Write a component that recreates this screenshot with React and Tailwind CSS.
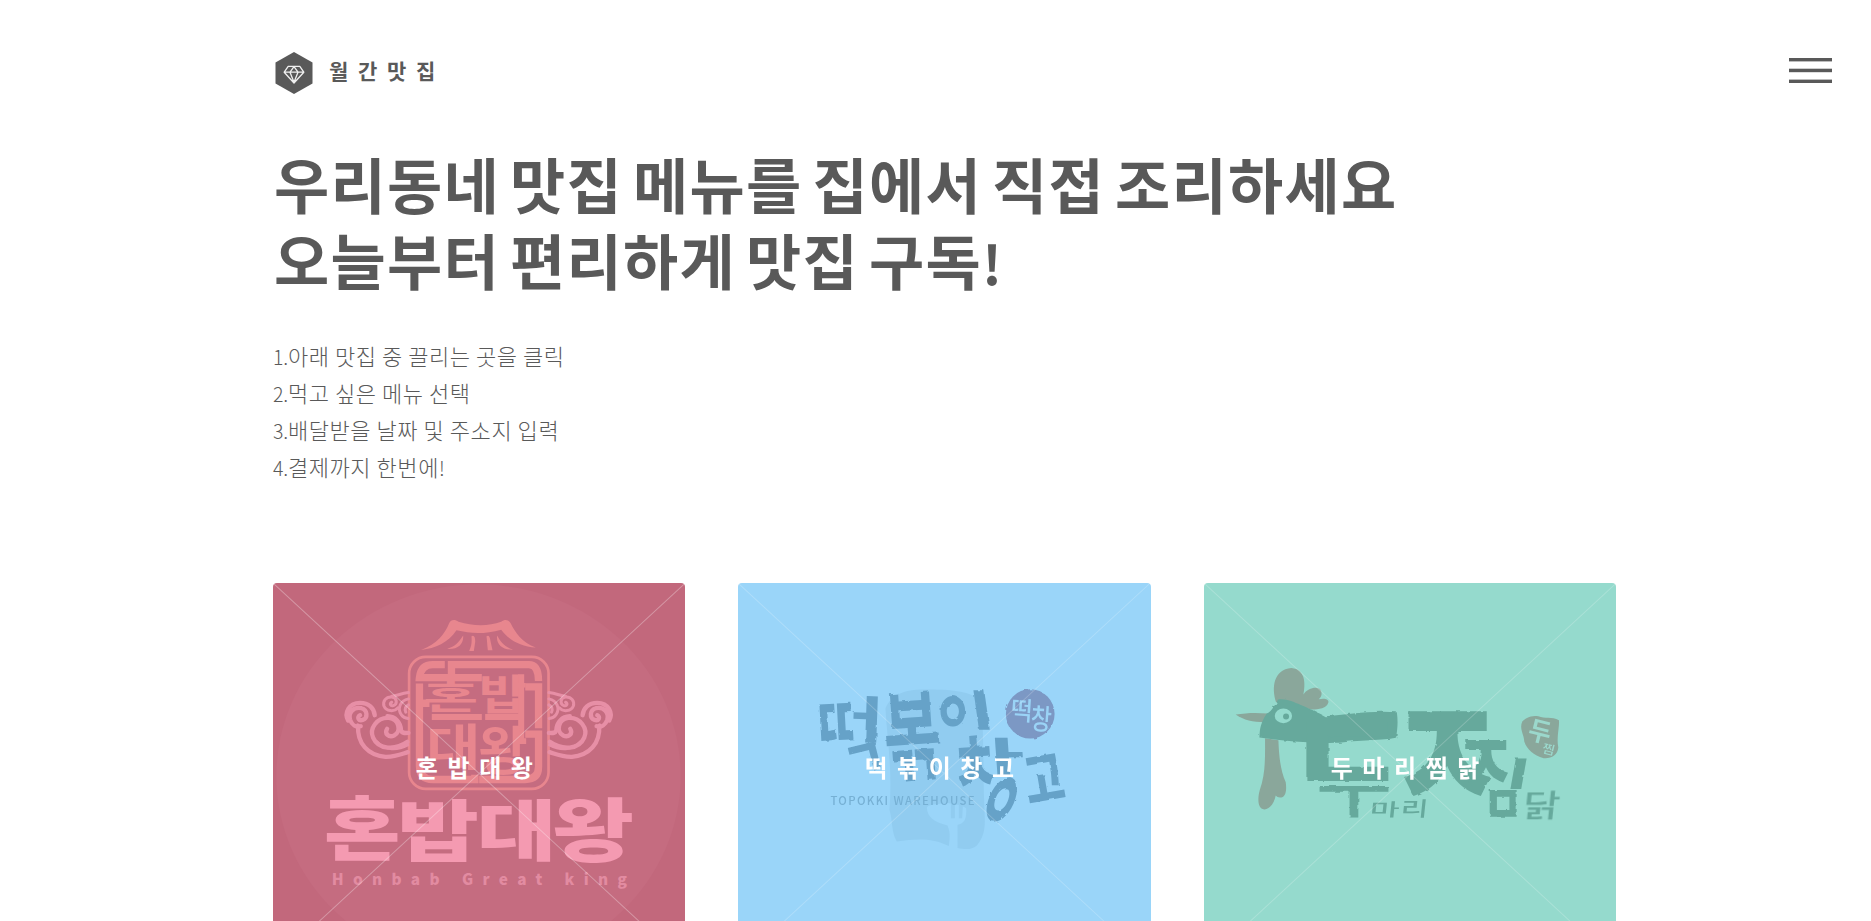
const FONT = '"Noto Sans CJK KR", "Noto Sans", sans-serif';

const ctx = document.createElement("canvas").getContext("2d");

// Sets a piece of real text so that its ink fills the box x, y, w, h.
function Ink({ children, x, y, w, h, weight = 900, rotate = 0, skew = 0, ...rest }) {
  ctx.font = `${weight} 100px ${FONT}`;
  const m = ctx.measureText(children);
  const inkW = m.actualBoundingBoxRight + m.actualBoundingBoxLeft;
  const inkH = m.actualBoundingBoxAscent + m.actualBoundingBoxDescent;
  const t = `translate(${x + w / 2} ${y + h / 2}) rotate(${rotate}) skewX(${skew}) scale(${w / inkW} ${h / inkH})`;
  return (
    <text
      transform={t}
      x={m.actualBoundingBoxLeft - inkW / 2}
      y={m.actualBoundingBoxAscent - inkH / 2}
      fontSize="100"
      fontWeight={weight}
      fontFamily={FONT}
      {...rest}
    >
      {children}
    </text>
  );
}

function Art({ children }) {
  return (
    <svg viewBox="24 24 1236 1144" className="absolute inset-0 h-full w-full" preserveAspectRatio="none" aria-hidden="true">
      {children}
    </svg>
  );
}

function Cross({ opacity }) {
  return (
    <path d="M24 24L1260 1168M1260 24L24 1168" stroke="#fff" strokeOpacity={opacity} strokeWidth="3" fill="none" />
  );
}

function Cloud() {
  return (
    <g fill="none" stroke="#e78fa6" strokeWidth="13" strokeLinecap="round">
      <path d="M285 421c-11 6-4 18 8 14c16-5 15-30-4-35c-24-5-40 13-34 34c5 16 18 24 32 20M249 437c-12-22 2-53 36-53c26 0 42 16 44 37" />
      <path d="M279 452c-3 54 30 90 82 94c28 1 48-8 67-14" />
      <path d="M366 462c-9 14 5 27 21 20c22-11 16-49-15-53c-36-3-60 32-48 59c16 37 66 39 103 13" />
      <path d="M367 424c24 1 40 18 41 43c2 8 10 8 22 7" />
      <path d="M334 500c27 27 62 27 94 10" strokeWidth="9" />
      <path d="M380 382c-8 3-4 13 5 10c12-4 12-24-5-26c-18-1-28 14-23 28c6 15 30 18 41 5" strokeWidth="9" />
      <path d="M380 364c14-1 27-8 50-11M430 372c-24 5-35 28-21 48c5 7 12 10 20 11M430 390c-8 4-12 12-8 22" strokeWidth="9" />
    </g>
  );
}

function HonbabArt() {
  return (
    <Art>
      <ellipse cx="640" cy="604" rx="606" ry="576" fill="#c56c80" />
      <g fill="#e8868e">
        <path d="M468 225c48-18 70-46 84-80c6-13 18-11 28-5c45 14 90 14 128 0c10-7 20-8 28 4c16 32 34 58 76 74c-46-4-80-22-104-54c-50 14-90 12-134 2c-26 38-62 54-106 59z" />
        <path d="M594 182c2 24-14 42-48 40c24-7 34-19 48-40zM619 184c8-6 12 4 11 18l-4 26h-14c8-16 8-28 7-44zM664 184c6-5 10 0 12 14l6 28h-14c-2-16-2-26-4-42zM696 182c10 20 22 34 48 42c-32 2-52-16-48-42z" />
      </g>
      <rect x="432" y="246" width="418" height="396" rx="50" fill="none" stroke="#e8868e" strokeWidth="8" />
      <g fill="none" stroke="#e8868e" strokeWidth="22">
        <path d="M539 269h-36q-36 0-40 39h187M559 258v50M559 269h232q29 0 29 49" />
        <path d="M463 326v246q0 42 40 42h126V600M463 385h30" />
        <path d="M780 336h40v124M780 478h40v98q0 38-40 38H642" />
        <path d="M768 298v200M500 426h150M660 426h108" strokeWidth="18" />
      </g>
      <g fill="#e8868e">
        <Ink x={482} y={318} w={150} h={92} weight={700}>혼</Ink>
        <Ink x={650} y={298} w={132} h={118} weight={700}>밥</Ink>
        <Ink x={494} y={446} w={138} h={140} weight={700}>대</Ink>
        <Ink x={644} y={450} w={140} h={150} weight={700}>왕</Ink>
      </g>
      <Cloud />
      <g transform="translate(1281 0) scale(-1 1)"><Cloud /></g>
      <g fill="#f49ab1">
        <Ink x={184} y={662} w={214} h={199}>혼</Ink>
        <Ink x={410} y={672} w={226} h={189}>밥</Ink>
        <Ink x={648} y={672} w={208} h={187}>대</Ink>
        <Ink x={868} y={667} w={232} h={200}>왕</Ink>
      </g>
      <text x="200" y="931" fontSize="46" fontWeight="900" fontFamily={FONT} fill="#e28ba1" textLength="885" lengthAdjust="spacing">
        Honbab Great king
      </text>
      <Cross opacity="0.3" />
    </Art>
  );
}

function Brush({ id, scale }) {
  return (
    <filter id={id} x="-5%" y="-5%" width="110%" height="110%">
      <feTurbulence type="fractalNoise" baseFrequency="0.045" numOctaves="2" seed="4" result="n" />
      <feDisplacementMap in="SourceGraphic" in2="n" scale={scale} />
    </filter>
  );
}

function TopokkiArt() {
  return (
    <Art>
      <Brush id="brush-blue" scale="9" />
      <path
        fill="#91ccf0"
        d="M466 400c20-44 60-58 130-56c80 0 140 8 156 40c10 80 6 200 10 300c2 60 8 90-22 128c-16 14-34 12-58 8V750c20-4 28-16 26-50l-10-6l-2 36h-10v-40h-12v40h-12v-44l-12-2c-18 4-56 4-60 14c2 30 20 42 62 54c10 24 6 40 4 62c-50-26-100-22-156-14c-16-26-12-60-22-96c10-120-8-220-12-304z"
      />
      <g filter="url(#brush-blue)">
        <g fill="#66a2c8">
          <Ink x={270} y={384} w={98} h={114} weight={900} rotate={-3}>ㄸ</Ink>
          <Ink x={368} y={362} w={74} h={142} weight={900} rotate={2}>ㅓ</Ink>
          <Ink x={362} y={508} w={82} h={86} weight={900} rotate={-14}>ㄱ</Ink>
          <Ink x={468} y={350} w={158} h={272} weight={700} rotate={-4}>볶</Ink>
          <Ink x={630} y={362} w={76} h={90} weight={900}>ㅇ</Ink>
          <Ink x={738} y={344} w={34} h={120} weight={900} skew={8}>ㅣ</Ink>
          <Ink x={682} y={478} w={104} h={154} weight={900} rotate={-4}>ㅊ</Ink>
          <Ink x={796} y={488} w={82} h={116} weight={900} skew={4}>ㅏ</Ink>
          <Ink x={774} y={606} w={82} h={136} weight={900} skew={-18}>ㅇ</Ink>
          <Ink x={886} y={540} w={110} h={138} weight={900} rotate={-10}>고</Ink>
        </g>
        <ellipse cx="900" cy="417" rx="73" ry="74" fill="#7b98c4" />
      </g>
      <g fill="#9ad3f6">
        <Ink x={846} y={370} w={54} h={72} weight={500} rotate={4}>떡</Ink>
        <Ink x={904} y={392} w={58} h={80} weight={500} rotate={4}>창</Ink>
      </g>
      <text x="301" y="690" fontSize="34" fontWeight="500" fontFamily={FONT} fill="#76b0d4" textLength="432" lengthAdjust="spacing">
        TOPOKKI WAREHOUSE
      </text>
      <Cross opacity="0.2" />
    </Art>
  );
}

function ChickenArt() {
  return (
    <Art>
      <Brush id="brush-green" scale="9" />
      <g fill="#8aa79b">
        <path d="M240 382c-14-44-8-98 46-103c44 4 42 50 36 80c14-22 50-28 54-8c2 10-2 16-8 22c18-4 30 0 29 9c-4 18-30 22-50 22c-36-8-60-20-107-22z" />
        <path d="M119 419c34-6 66-6 96-3l4 16l-14 10c-34 0-62-6-86-23z" />
        <path d="M207 490l40 6c2 50 6 90 22 126c4 30-2 46-17 46c-6 0-10-2-13-6c-4 22-18 42-34 42c-22-2-20-36-14-58c18-50 16-100 16-156z" />
      </g>
      <g fill="#66a99c" filter="url(#brush-green)">
        <path d="M190 488c2-14-2-36 22-72c10-2 22-20 34-42c30-4 54 12 78 20c26 12 40 18 62 30c70-6 140-18 216-12c4 28 2 48-2 76c-20 8-100 6-170 16c-80 2-160-4-240-16z" />
        <Ink x={330} y={440} w={250} h={180} weight={800}>ㄷ</Ink>
        <Ink x={370} y={634} w={208} h={96} weight={500}>ㅜ</Ink>
        <Ink x={622} y={411} w={262} h={258} weight={900}>ㅈ</Ink>
        <Ink x={802} y={495} w={134} h={130} weight={900}>ㅈ</Ink>
        <Ink x={950} y={550} w={34} h={92} skew={-10}>ㅣ</Ink>
        <Ink x={880} y={646} w={82} h={82}>ㅁ</Ink>
      </g>
      <g fill="#66a99c">
        <Ink x={528} y={678} w={80} h={50} weight={500} skew={-6}>마</Ink>
        <Ink x={622} y={672} w={64} h={56} weight={500} skew={-6}>리</Ink>
        <Ink x={990} y={648} w={98} h={86} weight={500} skew={-6}>닭</Ink>
      </g>
      <ellipse cx="262" cy="423" rx="26" ry="22" fill="#95dacd" />
      <circle cx="270" cy="425" r="9" fill="#66a99c" />
      <path d="M978 440c10-10 26-20 48-16c20 8 40 0 62 12c2 20-8 50-2 82c-2 24-22 34-44 32c-30-8-50-26-58-50c0-20-16-38-6-60z" fill="#8aa79b" />
      <g fill="#9bd8cc">
        <Ink x={1000} y={436} w={62} h={70} weight={700} rotate={14}>두</Ink>
        <Ink x={1040} y={506} w={32} h={34} weight={500} rotate={14}>찜</Ink>
      </g>
      <Cross opacity="0.2" />
    </Art>
  );
}

const CARDS = [
  { name: "혼밥대왕", bg: "bg-[#c2687c]", Picture: HonbabArt },
  { name: "떡볶이창고", bg: "bg-[#9ad5f9]", Picture: TopokkiArt },
  { name: "두마리찜닭", bg: "bg-[#95dacd]", Picture: ChickenArt },
];

const STEPS = [
  ["1.", "아래 맛집 중 끌리는 곳을 클릭"],
  ["2.", "먹고 싶은 메뉴 선택"],
  ["3.", "배달받을 날짜 및 주소지 입력"],
  ["4.", "결제까지 한번에", "!"],
];

export default function App() {
  return (
    <div className="h-screen overflow-hidden bg-white pt-[52px] font-['Noto_Sans_CJK_KR','Noto_Sans',sans-serif] text-[#595959]">
      <header className="flex h-[42px] items-start justify-between pr-[39px] pl-[275px]">
        <a className="flex items-center">
          <svg width="38" height="42" viewBox="0 0 38 42">
            <path d="M19 0L37.5 10.5V31.5L19 42L.5 31.5V10.5z" fill="#595959" />
            <path
              d="M13.2 14.4h11.6l4 5.8L19 31 9.2 20.2zM9.2 20.2h19.6M15 20.2l4-5.6 4 5.6-4 10z"
              fill="none"
              stroke="#f0f0f0"
              strokeWidth="1.3"
              strokeLinejoin="round"
            />
          </svg>
          <span className="-mt-1.5 ml-4 text-[21px] leading-[42px] font-bold tracking-[9.7px]">월간맛집</span>
        </a>
        <button className="mt-[6px]" aria-label="menu">
          <svg width="43" height="25" viewBox="0 0 43 25" fill="#595959" className="block">
            <rect width="43" height="3.4" />
            <rect y="10.7" width="43" height="3.5" />
            <rect y="21.6" width="43" height="3.4" />
          </svg>
        </button>
      </header>
      <main className="px-[273px]">
        <h1 className="mt-[51px] w-[1343px] pl-px text-[60px] leading-[76px] font-bold tracking-[1.3px] [word-spacing:-4.9px] whitespace-nowrap">
          <span className="block">우리동네 맛집 메뉴를 집에서 직접 조리하세요</span>
          <span className="block">
            오늘부터 편리하게 맛집 구독<span className="text-[54px] leading-none">!</span>
          </span>
        </h1>
        <ol className="mt-[40px] text-[22px] leading-[37px] font-light tracking-[0.56px]">
          {STEPS.map(([num, text, mark]) => (
            <li key={num} className="h-[37px]">
              <span className="text-[19.5px] leading-none tracking-[-0.2px]">{num}</span>
              {text}
              {mark && <span className="text-[19.5px] leading-none">{mark}</span>}
            </li>
          ))}
        </ol>
        <section className="mt-[98px] grid w-[1343px] grid-cols-3 gap-[53px]">
          {CARDS.map(({ name, bg, Picture }) => (
            <article key={name} className={`relative flex h-[381px] items-center justify-center overflow-hidden rounded ${bg}`}>
              <Picture />
              <h2 className="relative -mt-[14px] text-2xl font-bold tracking-[9.6px] text-white">{name}</h2>
            </article>
          ))}
        </section>
      </main>
    </div>
  );
}
